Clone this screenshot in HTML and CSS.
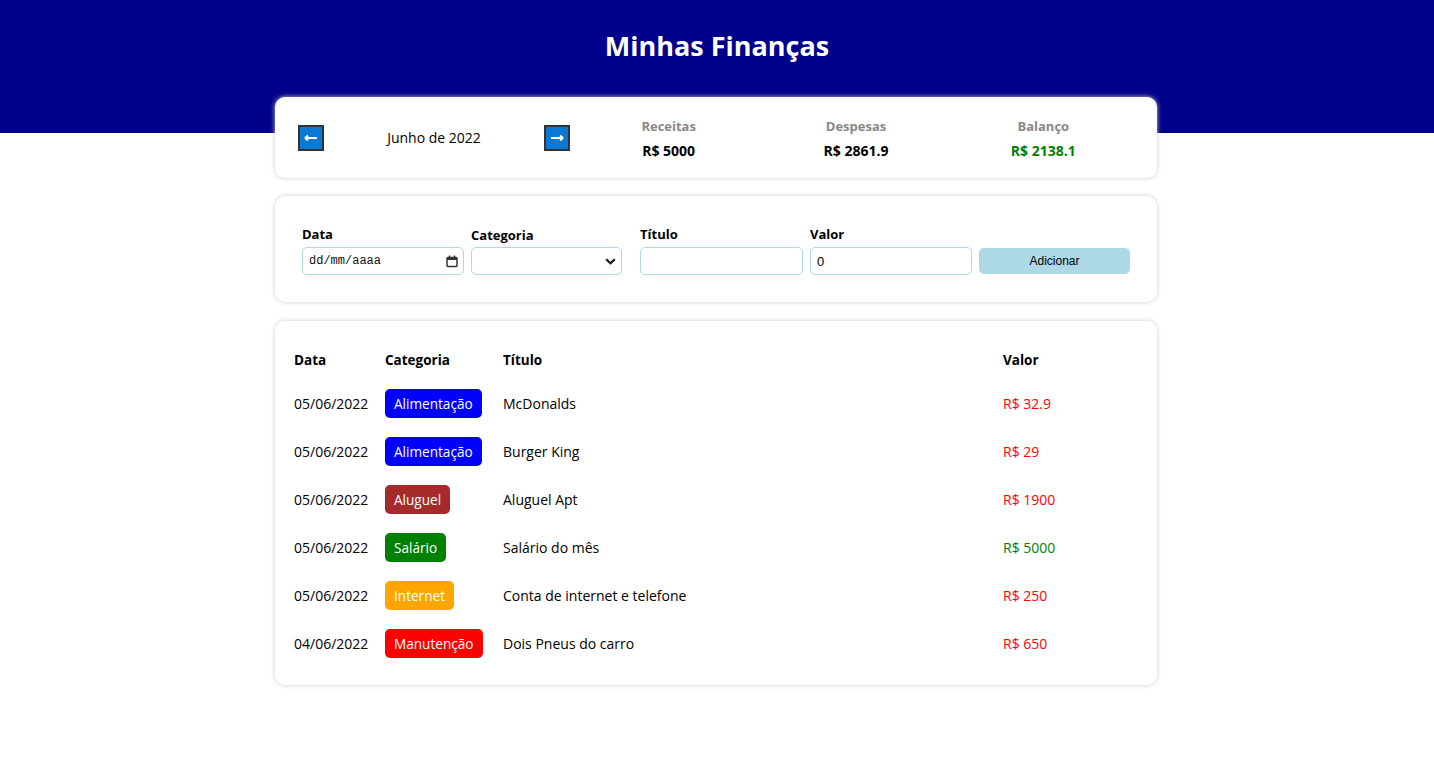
FILE: index.html
```html
<!DOCTYPE html>
<html lang="pt-BR">
<head>
<meta charset="utf-8">
<title>Minhas Finanças</title>
<link rel="stylesheet" href="styles.css">
</head>
<body>
<header class="header">
  <h1 class="header-title">Minhas Finanças</h1>
</header>
<main class="container">
  <section class="card info">
    <div class="month-area">
      <div class="month-arrow">
        <svg width="14" height="8" viewBox="0 0 14 8"><path d="M1 4H13M1 4L4 1.5M1 4L4 6.5" stroke="#fff" stroke-width="2" fill="none"/></svg>
      </div>
      <div class="month-title">Junho de 2022</div>
      <div class="month-arrow">
        <svg width="14" height="8" viewBox="0 0 14 8"><path d="M1 4H13M13 4L10 1.5M13 4L10 6.5" stroke="#fff" stroke-width="2" fill="none"/></svg>
      </div>
    </div>
    <div class="resume-area">
      <div class="resume-item">
        <div class="resume-title">Receitas</div>
        <div class="resume-value">R$ 5000</div>
      </div>
      <div class="resume-item">
        <div class="resume-title">Despesas</div>
        <div class="resume-value">R$ 2861.9</div>
      </div>
      <div class="resume-item">
        <div class="resume-title">Balanço</div>
        <div class="resume-value positive">R$ 2138.1</div>
      </div>
    </div>
  </section>

  <section class="card form-card">
    <div class="form-grid">
      <label class="field">
        <span class="field-label">Data</span>
        <span class="input-wrap">
          <input class="input date-input" type="text" placeholder="dd/mm/aaaa">
          <svg class="cal-icon" width="12" height="13" viewBox="0 0 12 13"><rect x="1" y="2.5" width="10" height="9" rx="1" fill="none" stroke="#333" stroke-width="1.5"/><rect x="1" y="2.5" width="10" height="2.5" fill="#333"/><path d="M3.5 0.5V3M8.5 0.5V3" stroke="#333" stroke-width="1.5"/></svg>
        </span>
      </label>
      <label class="field">
        <span class="field-label label-low">Categoria</span>
        <span class="input-wrap select-wrap">
          <select class="input select-input"><option></option></select>
          <svg class="chev-icon" width="11" height="7" viewBox="0 0 11 7"><path d="M1.2 1.2L5.5 5.3L9.8 1.2" stroke="#111" stroke-width="2.2" fill="none"/></svg>
        </span>
      </label>
      <label class="field">
        <span class="field-label">Título</span>
        <input class="input" type="text">
      </label>
      <label class="field">
        <span class="field-label">Valor</span>
        <input class="input" type="number" value="0">
      </label>
      <div class="field">
        <span class="field-label">&nbsp;</span>
        <button class="add-button">Adicionar</button>
      </div>
    </div>
  </section>

  <section class="card table-card">
    <table class="table">
      <colgroup>
        <col class="col-date"><col class="col-cat"><col><col class="col-value">
      </colgroup>
      <thead>
        <tr><th>Data</th><th>Categoria</th><th>Título</th><th>Valor</th></tr>
      </thead>
      <tbody>
        <tr><td>05/06/2022</td><td><span class="tag tag-food">Alimentação</span></td><td>McDonalds</td><td class="expense">R$ 32.9</td></tr>
        <tr><td>05/06/2022</td><td><span class="tag tag-food">Alimentação</span></td><td>Burger King</td><td class="expense">R$ 29</td></tr>
        <tr><td>05/06/2022</td><td><span class="tag tag-rent">Aluguel</span></td><td>Aluguel Apt</td><td class="expense">R$ 1900</td></tr>
        <tr><td>05/06/2022</td><td><span class="tag tag-salary">Salário</span></td><td>Salário do mês</td><td class="income">R$ 5000</td></tr>
        <tr><td>05/06/2022</td><td><span class="tag tag-internet">Internet</span></td><td>Conta de internet e telefone</td><td class="expense">R$ 250</td></tr>
        <tr><td>04/06/2022</td><td><span class="tag tag-repair">Manutenção</span></td><td>Dois Pneus do carro</td><td class="expense">R$ 650</td></tr>
      </tbody>
    </table>
  </section>
</main>
</body>
</html>
```

FILE: styles.css
```css
* { box-sizing: border-box; }

body {
  margin: 0;
  font-family: "Open Sans", "Noto Sans", sans-serif;
  color: #000;
  background: #fff;
}

.header {
  background: #00008b;
  height: 133px;
  text-align: center;
  padding-top: 26px;
}

.header-title {
  margin: 0;
  color: #fff;
  font-size: 27px;
  line-height: 40px;
  font-weight: 700;
}

.container {
  width: 882px;
  margin: -36px auto 40px;
  position: relative;
  left: -1px;
}

.card {
  background: #fff;
  border-radius: 10px;
  box-shadow: 0 0 5px #ccc;
}

/* info card */
.info {
  height: 81px;
  padding: 0 20px;
  display: flex;
  align-items: center;
}

.month-area {
  width: 280px;
  display: flex;
  align-items: center;
  padding: 0 5px 0 3px;
}

.month-arrow {
  width: 26px;
  height: 26px;
  background: #0a78d7;
  border: 2px solid #333;
  display: flex;
  align-items: center;
  justify-content: center;
}

.month-title {
  flex: 1;
  text-align: center;
  font-size: 14px;
}

.resume-area {
  flex: 1;
  display: flex;
  padding-top: 2px;
}

.resume-item {
  flex: 1;
  text-align: center;
}

.resume-title {
  color: #888;
  font-weight: 700;
  font-size: 13px;
  line-height: 18px;
}

.resume-value {
  font-weight: 700;
  font-size: 14px;
  line-height: 18px;
  margin-top: 7px;
}

.resume-value.positive { color: green; }

/* form card */
.form-card {
  margin-top: 18px;
  padding: 28px 20px 27px 27px;
}

.form-grid {
  display: grid;
  grid-template-columns: 162px 162px 163px 162px 151px;
  column-gap: 7px;
  align-items: end;
}

.field {
  display: flex;
  flex-direction: column;
}

.field-label {
  font-weight: 700;
  font-size: 13px;
  line-height: 20px;
  margin-bottom: 3px;
}

.label-low { margin-bottom: 2px; }

.input-wrap {
  position: relative;
  display: block;
}

.select-wrap { width: 151px; }

.input {
  width: 100%;
  height: 28px;
  border: 1px solid #add8e6;
  border-radius: 5px;
  padding: 0 6px;
  font-family: "Liberation Sans", Arial, sans-serif;
  font-size: 13px;
  background: #fff;
  outline: none;
}

.date-input {
  font-family: "Liberation Mono", monospace;
  font-size: 12px;
}

.date-input::placeholder { color: #111; }

.cal-icon {
  position: absolute;
  right: 6px;
  top: 8px;
}

.select-input {
  -webkit-appearance: none;
  appearance: none;
  height: 28px;
}

.chev-icon {
  position: absolute;
  right: 6px;
  top: 11px;
  pointer-events: none;
}

.add-button {
  width: 151px;
  height: 26px;
  margin-bottom: 1px;
  background: #add8e6;
  border: none;
  border-radius: 5px;
  font-family: "Liberation Sans", Arial, sans-serif;
  font-size: 12px;
  color: #000;
}

/* table card */
.table-card {
  margin-top: 19px;
  padding: 19px 19px 18px 19px;
}

.table {
  width: 100%;
  border-collapse: collapse;
  font-size: 14px;
}

.col-date { width: 91px; }
.col-cat { width: 118px; }
.col-value { width: 135px; }

.table th {
  text-align: left;
  font-weight: 700;
  font-size: 13.5px;
  height: 39px;
  padding: 0;
}

.table td {
  height: 48px;
  padding: 0;
}

.tag {
  display: inline-block;
  padding: 5px 9px;
  border-radius: 5px;
  color: #fff;
  font-size: 13.6px;
  line-height: 19px;
}

.tag-food { background: #0000ff; }
.tag-rent { background: #a52a2a; }
.tag-salary { background: #008000; }
.tag-internet { background: #ffa500; }
.tag-repair { background: #ff0000; }

.expense { color: #ff0000; }
.income { color: #008000; }
```
